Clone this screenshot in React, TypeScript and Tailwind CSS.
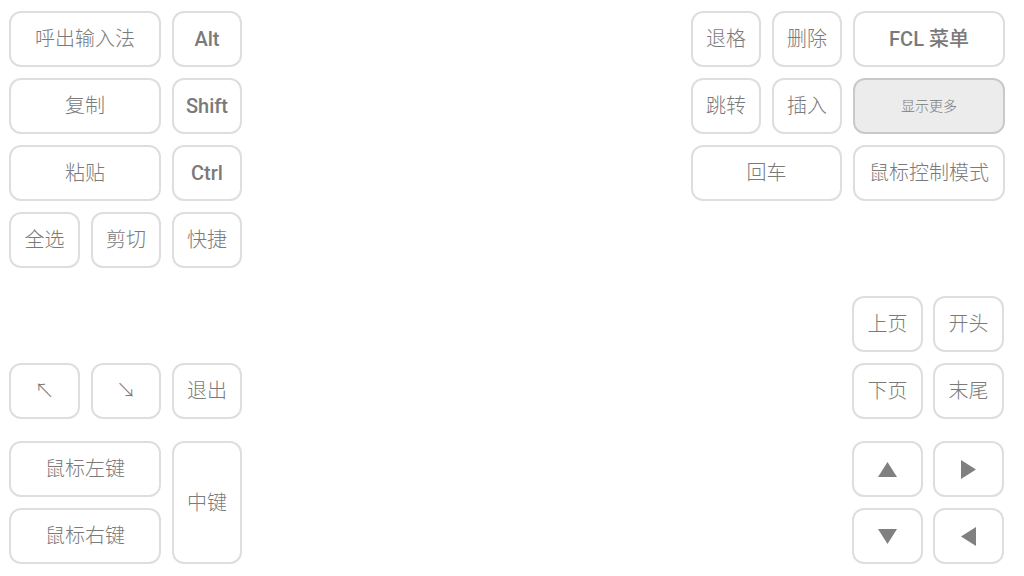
import React from "react";

const font = { fontFamily: 'Roboto, "Noto Sans CJK SC", sans-serif' };

function Key({
  children,
  className = "",
  strong = false,
  active = false,
}: {
  children: React.ReactNode;
  className?: string;
  strong?: boolean;
  active?: boolean;
}) {
  return (
    <div
      className={
        "flex items-center justify-center rounded-[12px] border-2 text-[#7a7a7a] " +
        (active
          ? "bg-[#ececec] border-[#c9c9c9] text-[14px] "
          : "bg-white border-[#dedede] text-[20px] ") +
        (strong ? "font-medium " : "font-light ") +
        className
      }
    >
      {children}
    </div>
  );
}

function Tri({ dir }: { dir: "up" | "down" | "left" | "right" }) {
  const pts: Record<string, string> = {
    up: "9.5,0 19,15 0,15",
    down: "0,0 19,0 9.5,15",
    right: "0,0 15,9.5 0,19",
    left: "15,0 15,19 0,9.5",
  };
  const vertical = dir === "up" || dir === "down";
  return (
    <svg
      width={vertical ? 19 : 15}
      height={vertical ? 15 : 19}
      viewBox={vertical ? "0 0 19 15" : "0 0 15 19"}
    >
      <polygon points={pts[dir]} fill="#808080" />
    </svg>
  );
}

export default function App() {
  return (
    <div
      className="w-[1024px] h-[576px] bg-white flex justify-between pl-[9px] pr-[19px] pt-[11px]"
      style={font}
    >
      {/* Left column */}
      <div className="flex flex-col w-[233px]">
        <div className="grid grid-cols-[71px_70px_70px] auto-rows-[56px] gap-[11px]">
          <Key className="col-span-2">呼出输入法</Key>
          <Key strong>Alt</Key>
          <Key className="col-span-2">复制</Key>
          <Key strong>Shift</Key>
          <Key className="col-span-2">粘贴</Key>
          <Key strong>Ctrl</Key>
          <Key>全选</Key>
          <Key>剪切</Key>
          <Key>快捷</Key>
        </div>
        <div className="grid grid-cols-[71px_70px_70px] auto-rows-[56px] gap-[11px] mt-[95px]">
          <Key className="text-[18px]">↖</Key>
          <Key className="text-[18px]">↘</Key>
          <Key>退出</Key>
        </div>
        <div className="grid grid-cols-[71px_70px_70px] auto-rows-[56px] gap-[11px] mt-[22px]">
          <Key className="col-span-2">鼠标左键</Key>
          <Key className="row-span-2">中键</Key>
          <Key className="col-span-2">鼠标右键</Key>
        </div>
      </div>

      {/* Right column */}
      <div className="flex flex-col w-[314px]">
        <div className="grid grid-cols-[70px_70px_152px] auto-rows-[56px] gap-x-[11px] gap-y-[11px]">
          <Key>退格</Key>
          <Key>删除</Key>
          <Key strong>FCL 菜单</Key>
          <Key>跳转</Key>
          <Key>插入</Key>
          <Key active>显示更多</Key>
          <Key className="col-span-2">回车</Key>
          <Key>鼠标控制模式</Key>
        </div>
        <div className="ml-auto mr-[1px] w-[152px] mt-[95px] grid grid-cols-[71px_71px] auto-rows-[56px] gap-x-[10px] gap-y-[11px]">
          <Key>上页</Key>
          <Key>开头</Key>
          <Key>下页</Key>
          <Key>末尾</Key>
        </div>
        <div className="ml-auto mr-[1px] w-[152px] mt-[22px] grid grid-cols-[71px_71px] auto-rows-[56px] gap-x-[10px] gap-y-[11px]">
          <Key>
            <Tri dir="up" />
          </Key>
          <Key>
            <Tri dir="right" />
          </Key>
          <Key>
            <Tri dir="down" />
          </Key>
          <Key>
            <Tri dir="left" />
          </Key>
        </div>
      </div>
    </div>
  );
}
